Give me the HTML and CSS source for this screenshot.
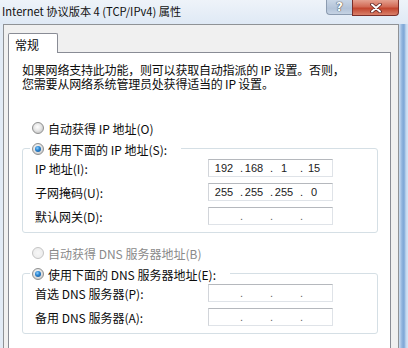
FILE: index.html
```html
<!DOCTYPE html>
<html lang="zh-CN">
<head>
<meta charset="utf-8">
<title>Internet 协议版本 4 (TCP/IPv4) 属性</title>
<link rel="stylesheet" href="styles.css">
</head>
<body>
<div class="window">
  <div class="titlebar">
    <span class="title">Internet 协议版本 4 (TCP/IPv4) 属性</span>
    <div class="caption-buttons">
      <span class="btn-help">?</span>
      <span class="btn-close">
        <svg width="12" height="10" viewBox="0 0 12 10">
          <path d="M2 1.5 L10 8.5 M10 1.5 L2 8.5" stroke="#5a2020" stroke-width="3.6" stroke-linecap="round"/>
          <path d="M2 1.5 L10 8.5 M10 1.5 L2 8.5" stroke="#ffffff" stroke-width="2" stroke-linecap="round"/>
        </svg>
      </span>
    </div>
  </div>
  <div class="frame">
    <div class="tabs"><span class="tab">常规</span></div>
    <div class="panel">
      <div class="intro">
        <div class="intro-line">如果网络支持此功能，则可以获取自动指派的 IP 设置。否则，</div>
        <div class="intro-line">您需要从网络系统管理员处获得适当的 IP 设置。</div>
      </div>

      <div class="radio-row"><span class="radio"></span><span>自动获得 IP 地址(O)</span></div>
      <div class="group">
        <div class="group-head"><span class="radio checked"></span><span>使用下面的 IP 地址(S):</span></div>
        <div class="field-row">
          <span class="label">IP 地址(I):</span>
          <div class="ip"><span class="oct">192</span><span class="dot">.</span><span class="oct">168</span><span class="dot">.</span><span class="oct">1</span><span class="dot">.</span><span class="oct">15</span></div>
        </div>
        <div class="field-row">
          <span class="label">子网掩码(U):</span>
          <div class="ip"><span class="oct">255</span><span class="dot">.</span><span class="oct">255</span><span class="dot">.</span><span class="oct">255</span><span class="dot">.</span><span class="oct">0</span></div>
        </div>
        <div class="field-row">
          <span class="label">默认网关(D):</span>
          <div class="ip empty"><span class="oct"></span><span class="dot">.</span><span class="oct"></span><span class="dot">.</span><span class="oct"></span><span class="dot">.</span><span class="oct"></span></div>
        </div>
      </div>

      <div class="radio-row disabled"><span class="radio"></span><span>自动获得 DNS 服务器地址(B)</span></div>
      <div class="group">
        <div class="group-head"><span class="radio checked"></span><span>使用下面的 DNS 服务器地址(E):</span></div>
        <div class="field-row">
          <span class="label">首选 DNS 服务器(P):</span>
          <div class="ip empty"><span class="oct"></span><span class="dot">.</span><span class="oct"></span><span class="dot">.</span><span class="oct"></span><span class="dot">.</span><span class="oct"></span></div>
        </div>
        <div class="field-row">
          <span class="label">备用 DNS 服务器(A):</span>
          <div class="ip empty"><span class="oct"></span><span class="dot">.</span><span class="oct"></span><span class="dot">.</span><span class="oct"></span><span class="dot">.</span><span class="oct"></span></div>
        </div>
      </div>
    </div>
  </div>
</div>
</body>
</html>
```

FILE: styles.css
```css
html, body {
  margin: 0;
  padding: 0;
  width: 408px;
  height: 348px;
  overflow: hidden;
}

body {
  font-family: "Noto Sans CJK SC", "Noto Sans", sans-serif;
  font-size: 12px;
  color: #0c0c0c;
}

.window {
  width: 408px;
  height: 348px;
  box-sizing: border-box;
  display: flex;
  flex-direction: column;
  overflow: hidden;
  background: linear-gradient(to right, #e2ebf6 0, #e2ebf6 399px, #cfe0f3 399px, #8fb3dd 402px, #7ea6d6 404px, #c2d8f0 406px, #d6e5f5 408px);
}

.titlebar {
  height: 24px;
  flex: none;
  display: flex;
  justify-content: space-between;
  align-items: flex-start;
  background: linear-gradient(to bottom, #eef3f9, #dfe9f5);
}

.title {
  padding-left: 2px;
  line-height: 22px;
  font-size: 11.2px;
  color: #111;
}

.caption-buttons {
  display: flex;
  margin-right: 9px;
}

.btn-help {
  width: 26px;
  height: 15px;
  box-sizing: border-box;
  border: 1px solid #8b9bb0;
  border-top: none;
  border-right: none;
  border-radius: 0 0 0 4px;
  background: linear-gradient(to bottom, #c9d6e6, #b3c3d8 60%, #c5d3e4);
  color: #fff;
  font-family: "DejaVu Sans", sans-serif;
  font-weight: bold;
  font-size: 12px;
  line-height: 14px;
  text-align: center;
  text-shadow: 0 0 1px #333, 0 0 1px #333;
}

.btn-close {
  width: 47px;
  height: 16px;
  box-sizing: border-box;
  border: 1px solid #7a2f2a;
  border-top: none;
  border-radius: 0 0 4px 0;
  background: linear-gradient(to bottom, #e5a190, #d26a55 45%, #c2452e 55%, #d9806a);
  display: flex;
  align-items: center;
  justify-content: center;
}

.frame {
  flex: 1;
  min-height: 0;
  margin-left: 3px;
  margin-right: 9px;
  border: 1px solid #8f9296;
  border-bottom: none;
  background: #f0f0f0;
  padding: 8px 7px 0 4px;
  display: flex;
  flex-direction: column;
}

.tabs {
  display: flex;
  margin-bottom: -1px;
  position: relative;
  z-index: 1;
}

.tab {
  height: 20px;
  width: 50px;
  box-sizing: border-box;
  border: 1px solid #898c95;
  border-bottom: none;
  border-radius: 2px 2px 0 0;
  background: #fff;
  padding-left: 6px;
  line-height: 21px;
  font-size: 12px;
}

.panel {
  flex: 1;
  min-height: 0;
  overflow: hidden;
  border: 1px solid #898c95;
  border-bottom: none;
  background: #fff;
  padding: 10px 10px 0 13px;
}

.intro {
  display: flex;
  flex-direction: column;
}

.intro-line {
  height: 14px;
  line-height: 14px;
  white-space: nowrap;
  letter-spacing: -0.2px;
}

.radio-row {
  display: flex;
  align-items: center;
  height: 20px;
  margin-top: 27px;
  margin-left: 10px;
}

.radio-row.disabled {
  margin-top: 10px;
  color: #8a8a8a;
}

.radio {
  width: 12px;
  height: 12px;
  box-sizing: border-box;
  border-radius: 50%;
  border: 1px solid #8e8f8f;
  background: radial-gradient(circle at 45% 40%, #ffffff 0, #e6e6e6 45%, #cfcfcf 70%, #f4f4f4 100%);
  margin-right: 4px;
  flex: none;
  display: flex;
  align-items: center;
  justify-content: center;
}

.radio-row.disabled .radio {
  border-color: #c4c4c4;
  background: radial-gradient(circle, #f7f7f7, #e9e9e9);
}

.radio.checked::after {
  content: "";
  width: 6px;
  height: 6px;
  border-radius: 50%;
  background: radial-gradient(circle at 40% 35%, #8fd0ff 0, #2e87d1 40%, #0f4f91 100%);
}

.group {
  width: 356px;
  box-sizing: border-box;
  margin-top: 10px;
  border: 1px solid #d5dfe5;
  border-radius: 3px;
  padding: 0 0 4px 12px;
}

.group + .radio-row {
  margin-top: 10px;
}

.group-head {
  display: flex;
  align-items: center;
  width: fit-content;
  height: 16px;
  margin-top: -8px;
  margin-bottom: -1px;
  margin-left: -5px;
  padding: 0 14px 0 2px;
  background: #fff;
}

.field-row {
  display: flex;
  align-items: center;
  height: 24px;
}

.label {
  width: 173px;
  flex: none;
}

.ip {
  width: 125px;
  height: 18px;
  box-sizing: border-box;
  border: 1px solid #dfe3e8;
  border-top-color: #b5b8bd;
  border-left-color: #d2d5da;
  background: #fff;
  display: flex;
  align-items: center;
  padding-left: 4px;
  font-family: "Liberation Sans", Arial, sans-serif;
  font-size: 11px;
  color: #222;
}

.oct {
  width: 22px;
  text-align: center;
}

.dot {
  width: 8px;
  text-align: right;
}

.ip.empty .dot {
  color: #666;
}
```
